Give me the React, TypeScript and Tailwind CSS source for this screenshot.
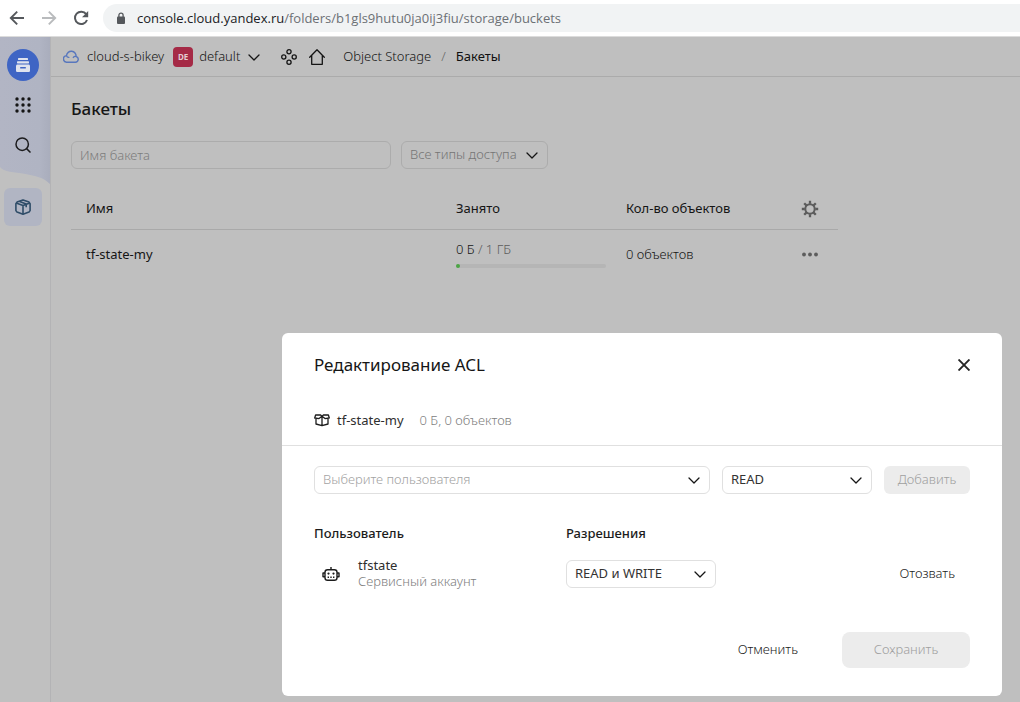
import React from "react";

function Chevron({ className = "" }: { className?: string }) {
  return (
    <svg viewBox="0 0 16 16" className={`h-4 w-4 ${className}`} fill="none" stroke="currentColor" strokeWidth="1.3" strokeLinecap="round" strokeLinejoin="round" aria-hidden="true">
      <path d="M3 6 8 11 13 6" />
    </svg>
  );
}

type SelectProps = {
  label: string;
  options: string[];
  wrapperClass: string;
  selectClass: string;
};

function Select({ label, options, wrapperClass, selectClass }: SelectProps) {
  return (
    <div className={`grid items-center ${wrapperClass}`}>
      <select
        aria-label={label}
        className={`col-start-1 row-start-1 h-7 w-full appearance-none rounded-md border bg-transparent pr-7 pl-2 text-[13px] ${selectClass}`}
      >
        {options.map((o) => (
          <option key={o}>{o}</option>
        ))}
      </select>
      <Chevron className="pointer-events-none col-start-1 row-start-1 mr-2 justify-self-end text-[#151515]" />
    </div>
  );
}

function BrowserBar() {
  return (
    <header className="flex h-[37px] items-center border-b border-[#dcdcdc] bg-white pl-2 text-[#55585c]">
      <button aria-label="Назад" className="flex h-5 w-[18px] items-center justify-center">
        <svg viewBox="0 0 16 16" className="h-4 w-4" fill="none" stroke="currentColor" strokeWidth="1.9">
          <path d="M15 8H2M8.2 1.6 1.8 8l6.4 6.4" />
        </svg>
      </button>
      <button aria-label="Вперёд" className="ml-[14px] flex h-5 w-[18px] items-center justify-center text-[#b9bbbd]">
        <svg viewBox="0 0 16 16" className="h-4 w-4" fill="none" stroke="currentColor" strokeWidth="1.9">
          <path d="M1 8h13M7.8 1.6 14.2 8l-6.4 6.4" />
        </svg>
      </button>
      <button aria-label="Обновить" className="ml-[14px] flex h-5 w-[18px] items-center justify-center">
        <svg viewBox="0 0 16 16" className="h-4 w-4" fill="none">
          <path d="M13.2 4.2A6.2 6.2 0 1 0 14 10" stroke="currentColor" strokeWidth="2" />
          <path d="M15.2 1v6.2H9z" fill="currentColor" />
        </svg>
      </button>
      <div className="ml-[13px] flex h-7 min-w-0 flex-1 items-center rounded-l-full bg-[#f1f3f4] pl-[13px]">
        <svg viewBox="0 0 10 13" className="h-[13px] w-[10px] shrink-0" aria-hidden="true">
          <rect x="1" y="4.6" width="8" height="7.4" rx="1" fill="#55585c" />
          <path d="M2.9 5V3.2a2.1 2.1 0 0 1 4.2 0V5" fill="none" stroke="#55585c" strokeWidth="1.3" />
        </svg>
        <span className="ml-[11px] truncate pt-px font-['Open_Sans','Noto_Sans',sans-serif] text-[13px] font-normal text-[#6c7074]">
          <span className="text-[#202124]">console.cloud.yandex.ru</span>/folders/b1gls9hutu0ja0ij3fiu/storage/buckets
        </span>
      </div>
    </header>
  );
}

function Sidebar() {
  return (
    <nav aria-label="Сервисы" className="relative flex w-[51px] shrink-0 flex-col border-r border-[#b3b3b5] bg-[#c0c0c0] pr-1">
      <svg viewBox="0 0 51 148" className="absolute top-0 left-0 h-[148px] w-[50px]" preserveAspectRatio="none" aria-hidden="true">
        <defs>
          <linearGradient id="wave" x1="0" x2="1" y1="0" y2="0">
            <stop offset="0" stopColor="#b2b5c4" />
            <stop offset="0.8" stopColor="#b0b4c3" />
            <stop offset="1" stopColor="#a9adbc" />
          </linearGradient>
        </defs>
        <path d="M0 0H51V147C44 140 36 139 26 137C14 135 4 135 0 130Z" fill="url(#wave)" />
      </svg>
      <div className="relative flex flex-col items-center pt-3">
        <button aria-label="Главная" className="flex h-8 w-8 items-center justify-center rounded-full bg-[#3f65c4]">
          <svg viewBox="0 0 16 16" className="h-4 w-4" fill="#dfe3ee">
            <rect x="3" y="1" width="10" height="2" rx="0.6" />
            <rect x="2" y="4.2" width="12" height="2.2" rx="0.6" />
            <path fillRule="evenodd" d="M1.8 7.4h12.4l.8 1.4V13.8a1.2 1.2 0 0 1-1.2 1.2H2.2A1.2 1.2 0 0 1 1 13.8V8.8zM5.2 9.9v1.6h5.6V9.9z" />
          </svg>
        </button>
        <button aria-label="Все сервисы" className="mt-4 flex h-4 w-4 items-center justify-center text-[#151515]">
          <svg viewBox="0 0 16 16" className="h-4 w-4" fill="currentColor">
            {[2, 8, 14].map((y) => [2, 8, 14].map((x) => <circle key={`${x}-${y}`} cx={x} cy={y} r="1.7" />))}
          </svg>
        </button>
        <button aria-label="Поиск" className="mt-6 flex h-4 w-4 items-center justify-center text-[#1c1c1e]">
          <svg viewBox="0 0 16 16" className="h-4 w-4" fill="none" stroke="currentColor" strokeWidth="1.5">
            <circle cx="7.2" cy="7.2" r="6.2" />
            <path d="m11.6 11.6 3.9 3.9" />
          </svg>
        </button>
        <button aria-label="Object Storage" className="mt-[35px] flex h-[38px] w-[38px] items-center justify-center rounded-md bg-[#b1b5c3] text-[#2f4d68]">
          <svg viewBox="0 0 16 16" className="h-4 w-4" fill="none" stroke="currentColor" strokeWidth="1.6" strokeLinejoin="round">
            <path d="M8 .9 14 3.1 15.1 4.6V11.6L14 13.1 8 15.2 2 13.1 .9 11.6V4.6L2 3.1Z" />
            <path d="M1.2 4 8 6.4 14.8 4M8 6.4V15M4.6 2.4 11.2 4.9V8.2" />
          </svg>
        </button>
      </div>
    </nav>
  );
}

function TopBar() {
  return (
    <div className="flex h-10 items-center border-b border-[#ababab] pl-3 text-[13px] text-[#151515]">
      <svg viewBox="0 0 16 16" className="h-4 w-4" fill="none" stroke="#5877bd" strokeWidth="1.4" strokeLinecap="round" aria-hidden="true">
        <path d="M3.5 6.6A3.3 3.3 0 0 0 4 13.2H12.3A2.9 2.9 0 0 0 13.1 7.5 4.8 4.8 0 0 0 3.5 6.6C3.8 7.6 4.6 8.3 5.8 8.4M13.1 7.5C12 7.2 10.9 7.5 10.3 8.5" />
      </svg>
      <a href="#cloud" className="ml-2">cloud-s-bikey</a>
      <span className="ml-[9px] flex h-5 w-5 items-center justify-center rounded bg-[#a52a46] text-[8px] font-bold text-[#e3cdd2]">DE</span>
      <button className="ml-1.5 flex items-center gap-1.5">
        default
        <Chevron />
      </button>
      <button aria-label="Ресурсы" className="ml-[19px]">
        <svg viewBox="0 0 16 16" className="h-4 w-4" fill="none" stroke="currentColor" strokeWidth="1.3">
          <circle cx="8" cy="2.8" r="2.1" />
          <circle cx="2.8" cy="8" r="2.1" />
          <circle cx="13.2" cy="8" r="2.1" />
          <circle cx="8" cy="13.2" r="2.1" />
        </svg>
      </button>
      <a href="#home" aria-label="Домой" className="ml-3">
        <svg viewBox="0 0 16 16" className="h-4 w-4" fill="none" stroke="currentColor" strokeWidth="1.3" strokeLinejoin="round" strokeLinecap="round">
          <path d="M.7 8.2 8 .8l7.3 7.4M2.7 6.5V15.3H13.3V6.5" />
        </svg>
      </a>
      <a href="#storage" className="ml-[18px]">Object Storage</a>
      <span className="mx-2.5 text-[#666]">/</span>
      <span className="font-normal text-[#101010]">Бакеты</span>
    </div>
  );
}

function Buckets() {
  return (
    <main className="px-5 pt-5">
      <h1 className="text-[17px] leading-6 font-medium text-[#161616]">Бакеты</h1>
      <div className="mt-5 flex gap-2.5">
        <input
          aria-label="Имя бакета"
          placeholder="Имя бакета"
          className="h-7 w-80 rounded-md border border-[#acacac] bg-transparent px-2 text-[13px] placeholder:text-[#7c7c7c]"
        />
        <Select label="Все типы доступа" options={["Все типы доступа"]} wrapperClass="w-[147px]" selectClass="border-[#acacac] text-[#757575]" />
      </div>
      <table className="mt-5 w-full max-w-[767px] table-fixed text-left text-[13px] text-[#151515]">
        <thead>
          <tr className="h-10 border-b border-[#a9a9a9]">
            <th className="pl-[15px] font-normal">Имя</th>
            <th className="w-[170px] pl-[15px] font-normal">Занято</th>
            <th className="w-[170px] pl-[15px] font-normal">Кол-во объектов</th>
            <th className="w-[57px]">
              <button aria-label="Настройки" className="mx-auto block text-[#5c5c5c]">
                <svg viewBox="0 0 18 18" className="h-[18px] w-[18px]" fill="none" stroke="currentColor">
                  <circle cx="9" cy="9" r="4.7" strokeWidth="2" />
                  <path strokeWidth="2.3" d="M9 .8v3M9 14.2v3M.8 9h3M14.2 9h3M3.2 3.2l2.2 2.2M12.6 12.6l2.2 2.2M3.2 14.8l2.2-2.2M12.6 5.4l2.2-2.2" />
                </svg>
              </button>
            </th>
          </tr>
        </thead>
        <tbody>
          <tr className="h-[50px]">
            <td className="pl-[15px] font-normal">tf-state-my</td>
            <td className="pr-[5px] pl-[15px]">
              <div className="leading-[18px]">
                0 Б <span className="text-[#5c5c5c]">/ 1 ГБ</span>
              </div>
              <div className="mt-1.5 h-1 rounded-full bg-[#b5b5b5]">
                <div className="h-1 w-1 rounded-full bg-[#4ba544]" />
              </div>
            </td>
            <td className="pl-[15px]">0 объектов</td>
            <td>
              <button aria-label="Действия" className="mx-auto block text-[#5c5c5c]">
                <svg viewBox="0 0 16 16" className="h-4 w-4" fill="currentColor">
                  <circle cx="2" cy="8.5" r="1.9" />
                  <circle cx="8" cy="8.5" r="1.9" />
                  <circle cx="14" cy="8.5" r="1.9" />
                </svg>
              </button>
            </td>
          </tr>
        </tbody>
      </table>
    </main>
  );
}

function AclDialog() {
  return (
    <section role="dialog" aria-labelledby="acl-title" className="w-full max-w-[720px] rounded-md bg-white pb-7 text-[13px] text-[#1c1c1c]">
      <div className="flex items-center justify-between px-8 pt-5">
        <h2 id="acl-title" className="text-[17px] leading-6 font-normal text-[#161616]">Редактирование ACL</h2>
        <button aria-label="Закрыть" className="text-[#262626]">
          <svg viewBox="0 0 12 12" className="h-3 w-3" fill="none" stroke="currentColor" strokeWidth="1.9">
            <path d="m.5.5 11 11m0-11-11 11" />
          </svg>
        </button>
      </div>
      <div className="flex items-center border-b border-[#e0e0e0] px-8 pt-[33px] pb-[15px] leading-5">
        <svg viewBox="0 0 16 16" className="h-4 w-4" fill="none" stroke="currentColor" strokeWidth="1.3" strokeLinejoin="round" aria-hidden="true">
          <path d="M1.6 3H6.6L8 4.2 9.4 3H14.4L15.3 6 11 6.6 8 4.2 5 6.6 .7 6ZM2 6.6V12L8 13.6 14 12V6.6M8 4.2V13.4" />
        </svg>
        <span className="ml-[7px] font-normal text-[#2e2e2e]">tf-state-my</span>
        <span className="ml-4 text-[#808080]">0 Б, 0 объектов</span>
      </div>
      <div className="flex gap-3 px-8 pt-5">
        <Select label="Выберите пользователя" options={["Выберите пользователя"]} wrapperClass="min-w-0 flex-1" selectClass="border-[#e0e0e0] text-[#a3a3a3]" />
        <Select label="Разрешение" options={["READ"]} wrapperClass="w-[150px]" selectClass="border-[#e0e0e0] font-normal text-[#333]" />
        <button disabled className="h-7 w-[86px] rounded-md bg-[#ececec] text-[#a0a0a0]">Добавить</button>
      </div>
      <div className="px-8 pt-[30px]">
        <table className="w-full table-fixed text-left">
          <thead>
            <tr className="h-5">
              <th className="w-[252px] font-medium">Пользователь</th>
              <th className="font-medium">Разрешения</th>
              <td className="w-[100px]" />
            </tr>
          </thead>
          <tbody>
            <tr className="h-[60px]">
              <td>
                <div className="flex items-center pl-2">
                  <svg viewBox="0 0 18 18" className="h-[18px] w-[18px]" fill="none" stroke="currentColor" strokeWidth="1.4" aria-hidden="true">
                    <rect x="3" y="4.7" width="12" height="10.6" rx="2.6" />
                    <path d="M9 4.7V2M1 7.6v4.6M17 7.6v4.6M1 8h2M1 11.8h2M15 8h2M15 11.8h2" />
                    <path d="M5.6 12.2h1.4M8.3 12.2h1.4M11 12.2h1.4" />
                    <circle cx="6.5" cy="8.6" r="1.1" fill="currentColor" stroke="none" />
                    <circle cx="11.5" cy="8.6" r="1.1" fill="currentColor" stroke="none" />
                  </svg>
                  <div className="ml-[18px] pb-0.5 leading-4">
                    <div className="font-normal text-[#2e2e2e]">tfstate</div>
                    <div className="text-[#808080]">Сервисный аккаунт</div>
                  </div>
                </div>
              </td>
              <td>
                <Select label="Разрешения tfstate" options={["READ и WRITE"]} wrapperClass="w-[150px]" selectClass="border-[#e0e0e0] font-normal text-[#333]" />
              </td>
              <td className="pr-[15px] text-right">
                <button>Отозвать</button>
              </td>
            </tr>
          </tbody>
        </table>
      </div>
      <div className="flex justify-end px-8 pt-7">
        <button className="h-9 px-11">Отменить</button>
        <button disabled className="h-9 w-32 rounded-lg bg-[#ececec] text-[#a0a0a0]">Сохранить</button>
      </div>
    </section>
  );
}

export default function App() {
  return (
    <div className="flex min-h-screen flex-col bg-[#bfbfbf] font-['Noto_Sans',sans-serif] font-light">
      <BrowserBar />
      <div className="relative flex flex-1">
        <Sidebar />
        <div className="min-w-0 flex-1">
          <TopBar />
          <Buckets />
        </div>
        <div className="absolute inset-0 flex items-end justify-end pr-[18px] pb-1.5">
          <AclDialog />
        </div>
      </div>
    </div>
  );
}
